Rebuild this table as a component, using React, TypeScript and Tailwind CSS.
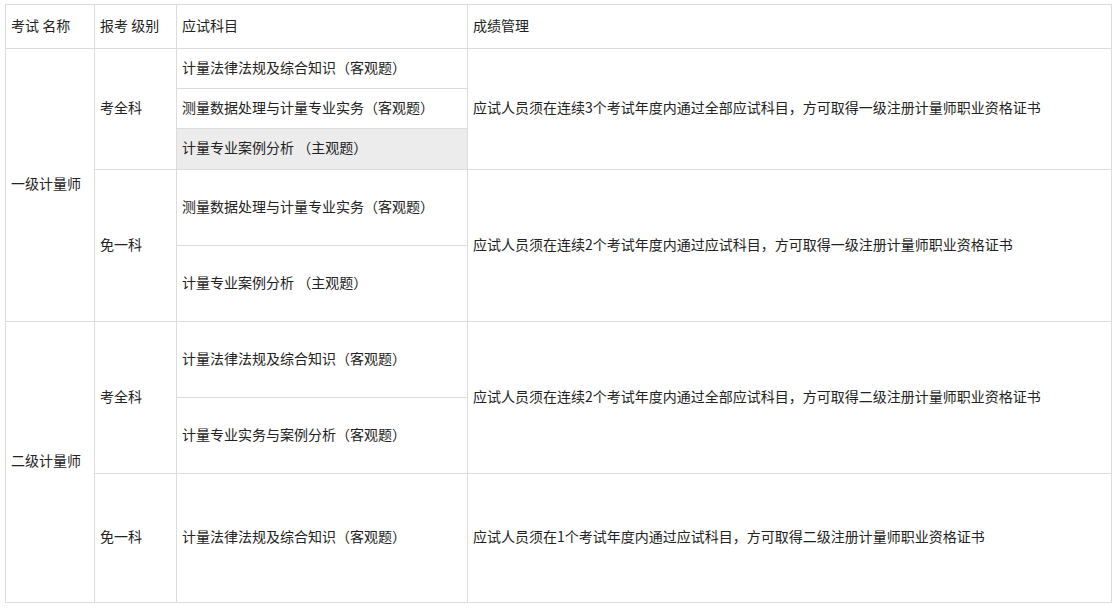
import React from 'react';

const cell = 'border border-[#dcdcdc] pl-[5px] pr-[6px] pt-0 pb-[4px] align-middle text-left font-normal';

const App: React.FC = () => {
  return (
    <div className="bg-white w-[1119px] h-[610px] pt-[4px] pl-[5px] text-[14px] text-[#222] font-['Microsoft_YaHei','Noto_Sans_CJK_SC',sans-serif]">
      <table className="border-collapse table-fixed w-[1106px] leading-[20px]">
        <colgroup>
          <col className="w-[89px]" />
          <col className="w-[82px]" />
          <col className="w-[291px]" />
          <col className="w-[644px]" />
        </colgroup>
        <tbody>
          <tr className="h-[44px]">
            <td className={cell}>考试 名称</td>
            <td className={cell}>报考 级别</td>
            <td className={cell}>应试科目</td>
            <td className={cell}>成绩管理</td>
          </tr>

          {/* 一级计量师 */}
          <tr className="h-[40px]">
            <td className={cell} rowSpan={5}>一级计量师</td>
            <td className={cell} rowSpan={3}>考全科</td>
            <td className={cell}>计量法律法规及综合知识（客观题）</td>
            <td className={cell} rowSpan={3}>应试人员须在连续3个考试年度内通过全部应试科目，方可取得一级注册计量师职业资格证书</td>
          </tr>
          <tr className="h-[40px]">
            <td className={cell}>测量数据处理与计量专业实务（客观题）</td>
          </tr>
          <tr className="h-[41px]">
            <td className={`${cell} bg-[#ececec]`}>计量专业案例分析 （主观题）</td>
          </tr>
          <tr className="h-[76px]">
            <td className={cell} rowSpan={2}>免一科</td>
            <td className={cell}>测量数据处理与计量专业实务（客观题）</td>
            <td className={cell} rowSpan={2}>应试人员须在连续2个考试年度内通过应试科目，方可取得一级注册计量师职业资格证书</td>
          </tr>
          <tr className="h-[76px]">
            <td className={cell}>计量专业案例分析 （主观题）</td>
          </tr>

          {/* 二级计量师 */}
          <tr className="h-[76px]">
            <td className={cell} rowSpan={3}>二级计量师</td>
            <td className={cell} rowSpan={2}>考全科</td>
            <td className={cell}>计量法律法规及综合知识（客观题）</td>
            <td className={cell} rowSpan={2}>应试人员须在连续2个考试年度内通过全部应试科目，方可取得二级注册计量师职业资格证书</td>
          </tr>
          <tr className="h-[76px]">
            <td className={cell}>计量专业实务与案例分析（客观题）</td>
          </tr>
          <tr className="h-[129px]">
            <td className={cell}>免一科</td>
            <td className={cell}>计量法律法规及综合知识（客观题）</td>
            <td className={cell}>应试人员须在1个考试年度内通过应试科目，方可取得二级注册计量师职业资格证书</td>
          </tr>
        </tbody>
      </table>
    </div>
  );
};

export default App;
